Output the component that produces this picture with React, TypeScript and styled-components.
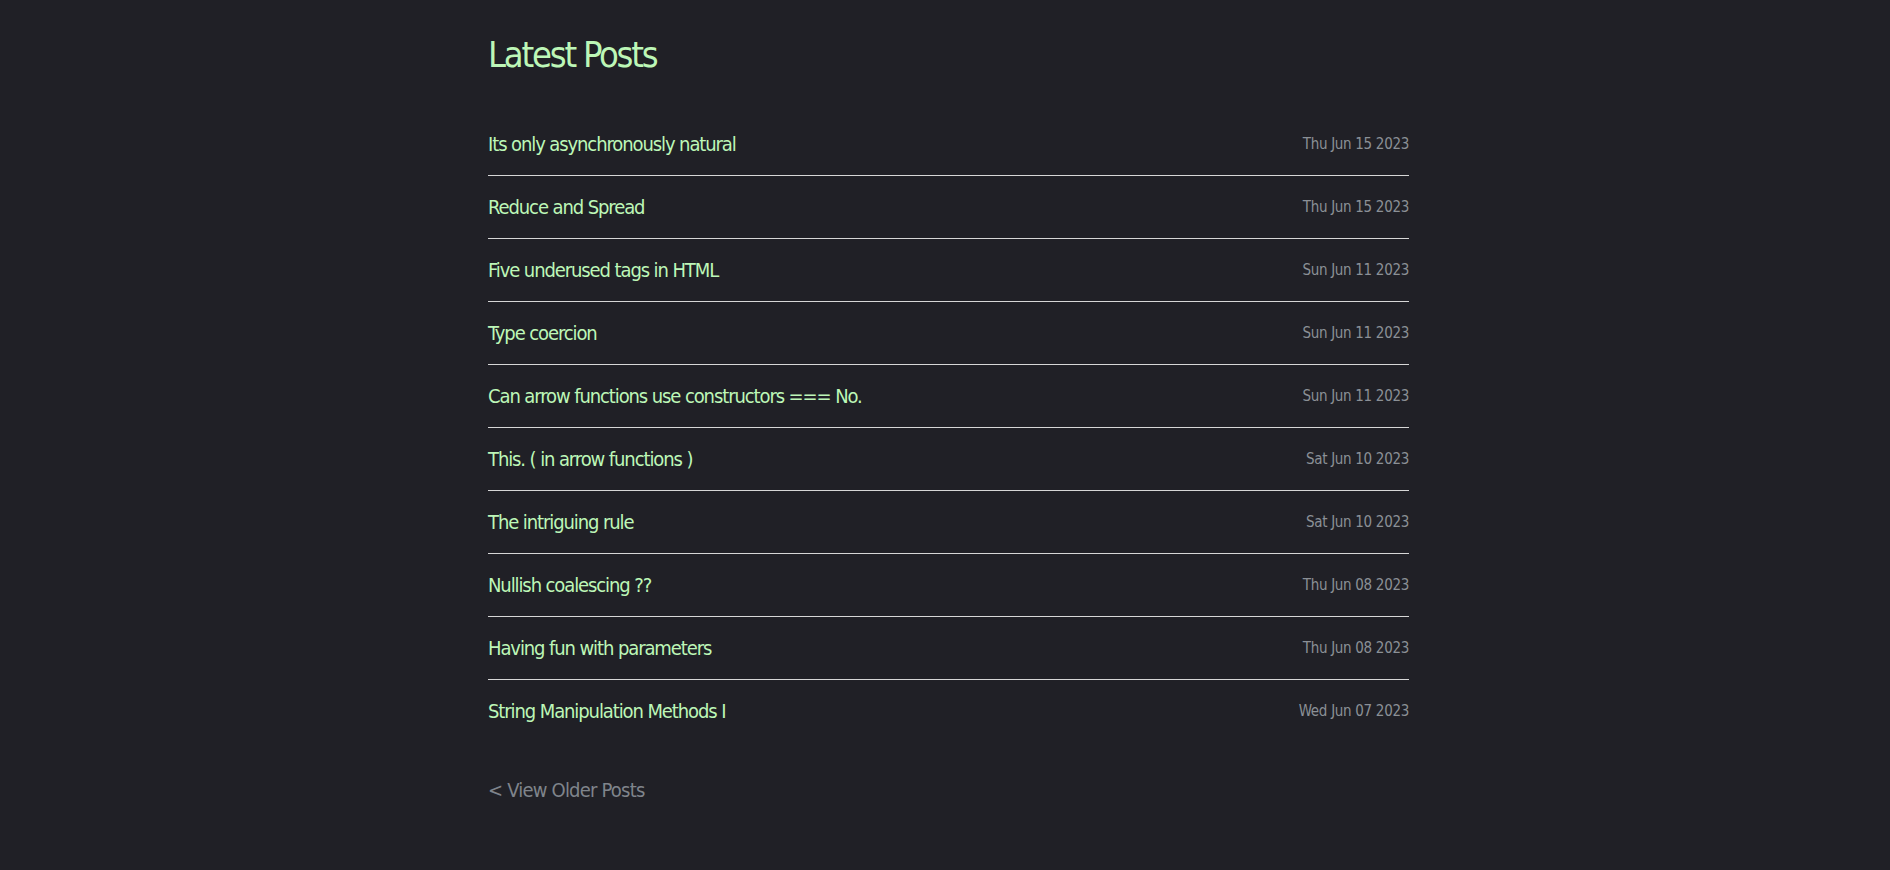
import React from 'react';
import styled, { createGlobalStyle } from 'styled-components';

const GlobalStyle = createGlobalStyle`
  html, body {
    margin: 0;
    padding: 0;
    background: #202026;
  }
  body {
    font-family: "DejaVu Sans", "Liberation Sans", sans-serif;
    font-stretch: condensed;
  }
`;

const Page = styled.div`
  min-height: 870px;
  background: #202026;
  display: flex;
  justify-content: center;
`;

const Main = styled.main`
  width: 921px;
  padding-left: 7px;
  padding-top: 28px;
`;

const Title = styled.h1`
  margin: 0 0 31px;
  font-size: 36px;
  font-weight: 400;
  line-height: 54px;
  color: #bdf7b7;
  letter-spacing: -2.2px;
`;

const List = styled.ul`
  list-style: none;
  margin: 0;
  padding: 0;
`;

const Row = styled.li<{ $last?: boolean }>`
  display: flex;
  align-items: center;
  justify-content: space-between;
  height: 62px;
  border-bottom: ${(p) => (p.$last ? 'none' : '1px solid #d6d6d6')};
`;

const PostLink = styled.a`
  color: #bdf7b7;
  font-size: 20px;
  text-decoration: none;
  letter-spacing: -1.1px;
`;

const PostDate = styled.span`
  color: #8b9096;
  font-size: 15px;
  letter-spacing: -0.3px;
`;

const Older = styled.a`
  display: inline-block;
  margin-top: 36px;
  color: #7f848b;
  font-size: 20px;
  letter-spacing: -0.8px;
  text-decoration: none;
`;

const posts = [
  ['Its only asynchronously natural', 'Thu Jun 15 2023'],
  ['Reduce and Spread', 'Thu Jun 15 2023'],
  ['Five underused tags in HTML', 'Sun Jun 11 2023'],
  ['Type coercion', 'Sun Jun 11 2023'],
  ['Can arrow functions use constructors === No.', 'Sun Jun 11 2023'],
  ['This. ( in arrow functions )', 'Sat Jun 10 2023'],
  ['The intriguing rule', 'Sat Jun 10 2023'],
  ['Nullish coalescing ??', 'Thu Jun 08 2023'],
  ['Having fun with parameters', 'Thu Jun 08 2023'],
  ['String Manipulation Methods I', 'Wed Jun 07 2023'],
];

export default function App() {
  return (
    <Page>
      <GlobalStyle />
      <Main>
        <Title>Latest Posts</Title>
        <List>
          {posts.map(([title, date], i) => (
            <Row key={i} $last={i === posts.length - 1}>
              <PostLink href="#">{title}</PostLink>
              <PostDate>{date}</PostDate>
            </Row>
          ))}
        </List>
        <Older href="#">&lt; View Older Posts</Older>
      </Main>
    </Page>
  );
}
